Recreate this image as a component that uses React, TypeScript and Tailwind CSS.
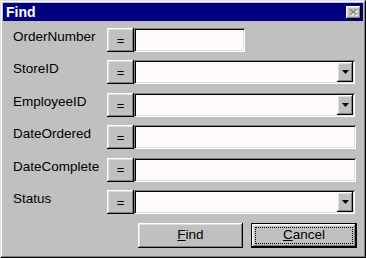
const raised =
  "shadow-[inset_-1px_-1px_#000,inset_1px_1px_#fff,inset_-2px_-2px_#808080,inset_2px_2px_#dfdfdf]";
const sunken =
  "shadow-[inset_1px_1px_#808080,inset_-1px_-1px_#fff,inset_2px_2px_#000,inset_-2px_-2px_#dfdfdf]";

const fields = [
  { label: "OrderNumber", kind: "short" },
  { label: "StoreID", kind: "combo" },
  { label: "EmployeeID", kind: "combo" },
  { label: "DateOrdered", kind: "text" },
  { label: "DateComplete", kind: "text" },
  { label: "Status", kind: "combo" },
];

const EqButton = () => (
  <div className={`w-[27px] h-[24px] shrink-0 bg-[#c0c0c0] flex items-center justify-center text-[13px] pt-[1px] ${raised}`}>
    =
  </div>
);

const Field = ({ kind }: { kind: string }) => {
  if (kind === "short") {
    return <div className={`w-[111px] h-[24px] bg-[#fffafa] ${sunken}`} />;
  }
  if (kind === "text") {
    return <div className={`w-[222px] h-[24px] bg-[#fffafa] ${sunken}`} />;
  }
  // combobox with arrow button
  return (
    <div className={`w-[221px] h-[24px] bg-[#fffafa] flex justify-end items-start p-[2px] ${sunken}`}>
      <div className={`w-[16px] h-[20px] bg-[#c0c0c0] flex items-center justify-center ${raised}`}>
        <svg width="7" height="4" viewBox="0 0 7 4">
          <path d="M0 0h7L3.5 4z" fill="#000" />
        </svg>
      </div>
    </div>
  );
};

const App = () => {
  return (
    <div className="w-[366px] h-[258px] font-['Liberation_Sans',Arial,sans-serif] text-black border border-t-[#dfdfdf] border-l-[#dfdfdf] border-r-black border-b-black">
      <div className="h-full flex flex-col p-[1px] bg-[#c0c0c0] border border-t-white border-l-white border-r-[#808080] border-b-[#808080]">
        {/* title bar */}
        <div className="h-[18px] shrink-0 bg-[#000080] flex items-center justify-between pl-[3px] pr-[2px]">
          <span className="text-white font-bold text-[14px] leading-none">Find</span>
          <div className={`w-[15px] h-[13px] bg-[#c0c0c0] flex items-center justify-center ${raised}`}>
            <svg width="9" height="8" viewBox="0 0 9 8">
              <path d="M1.5 1.5l6 5M7.5 1.5l-6 5" stroke="#fff" strokeWidth="1.6" transform="translate(1 1)" />
              <path d="M1.5 1.5l6 5M7.5 1.5l-6 5" stroke="#808080" strokeWidth="1.6" />
            </svg>
          </div>
        </div>

        {/* body */}
        <div className="flex-1 pt-[7px] pl-[10px] flex flex-col gap-[8.4px] text-[13px]">
          {fields.map((f) => (
            <div key={f.label} className="flex items-start h-[24px]">
              <div className="w-[94px] shrink-0 mt-[1px] leading-[15px] text-[13.5px]">{f.label}</div>
              <EqButton />
              <Field kind={f.kind} />
            </div>
          ))}

          <div className="flex justify-end gap-[8px] pr-[6px] mt-[0.5px] text-[13.5px]">
            <div className={`w-[105px] h-[25px] bg-[#c0c0c0] flex items-center justify-center ${raised}`}>
              <span>
                <span className="underline">F</span>ind
              </span>
            </div>
            <div className="w-[106px] h-[25px] border border-black">
              <div className={`w-full h-full bg-[#c0c0c0] p-[3px] ${raised}`}>
                <div className="w-full h-full border border-dotted border-black flex items-center justify-center">
                  <span>
                    <span className="underline">C</span>ancel
                  </span>
                </div>
              </div>
            </div>
          </div>
        </div>
      </div>
    </div>
  );
};

export default App;
